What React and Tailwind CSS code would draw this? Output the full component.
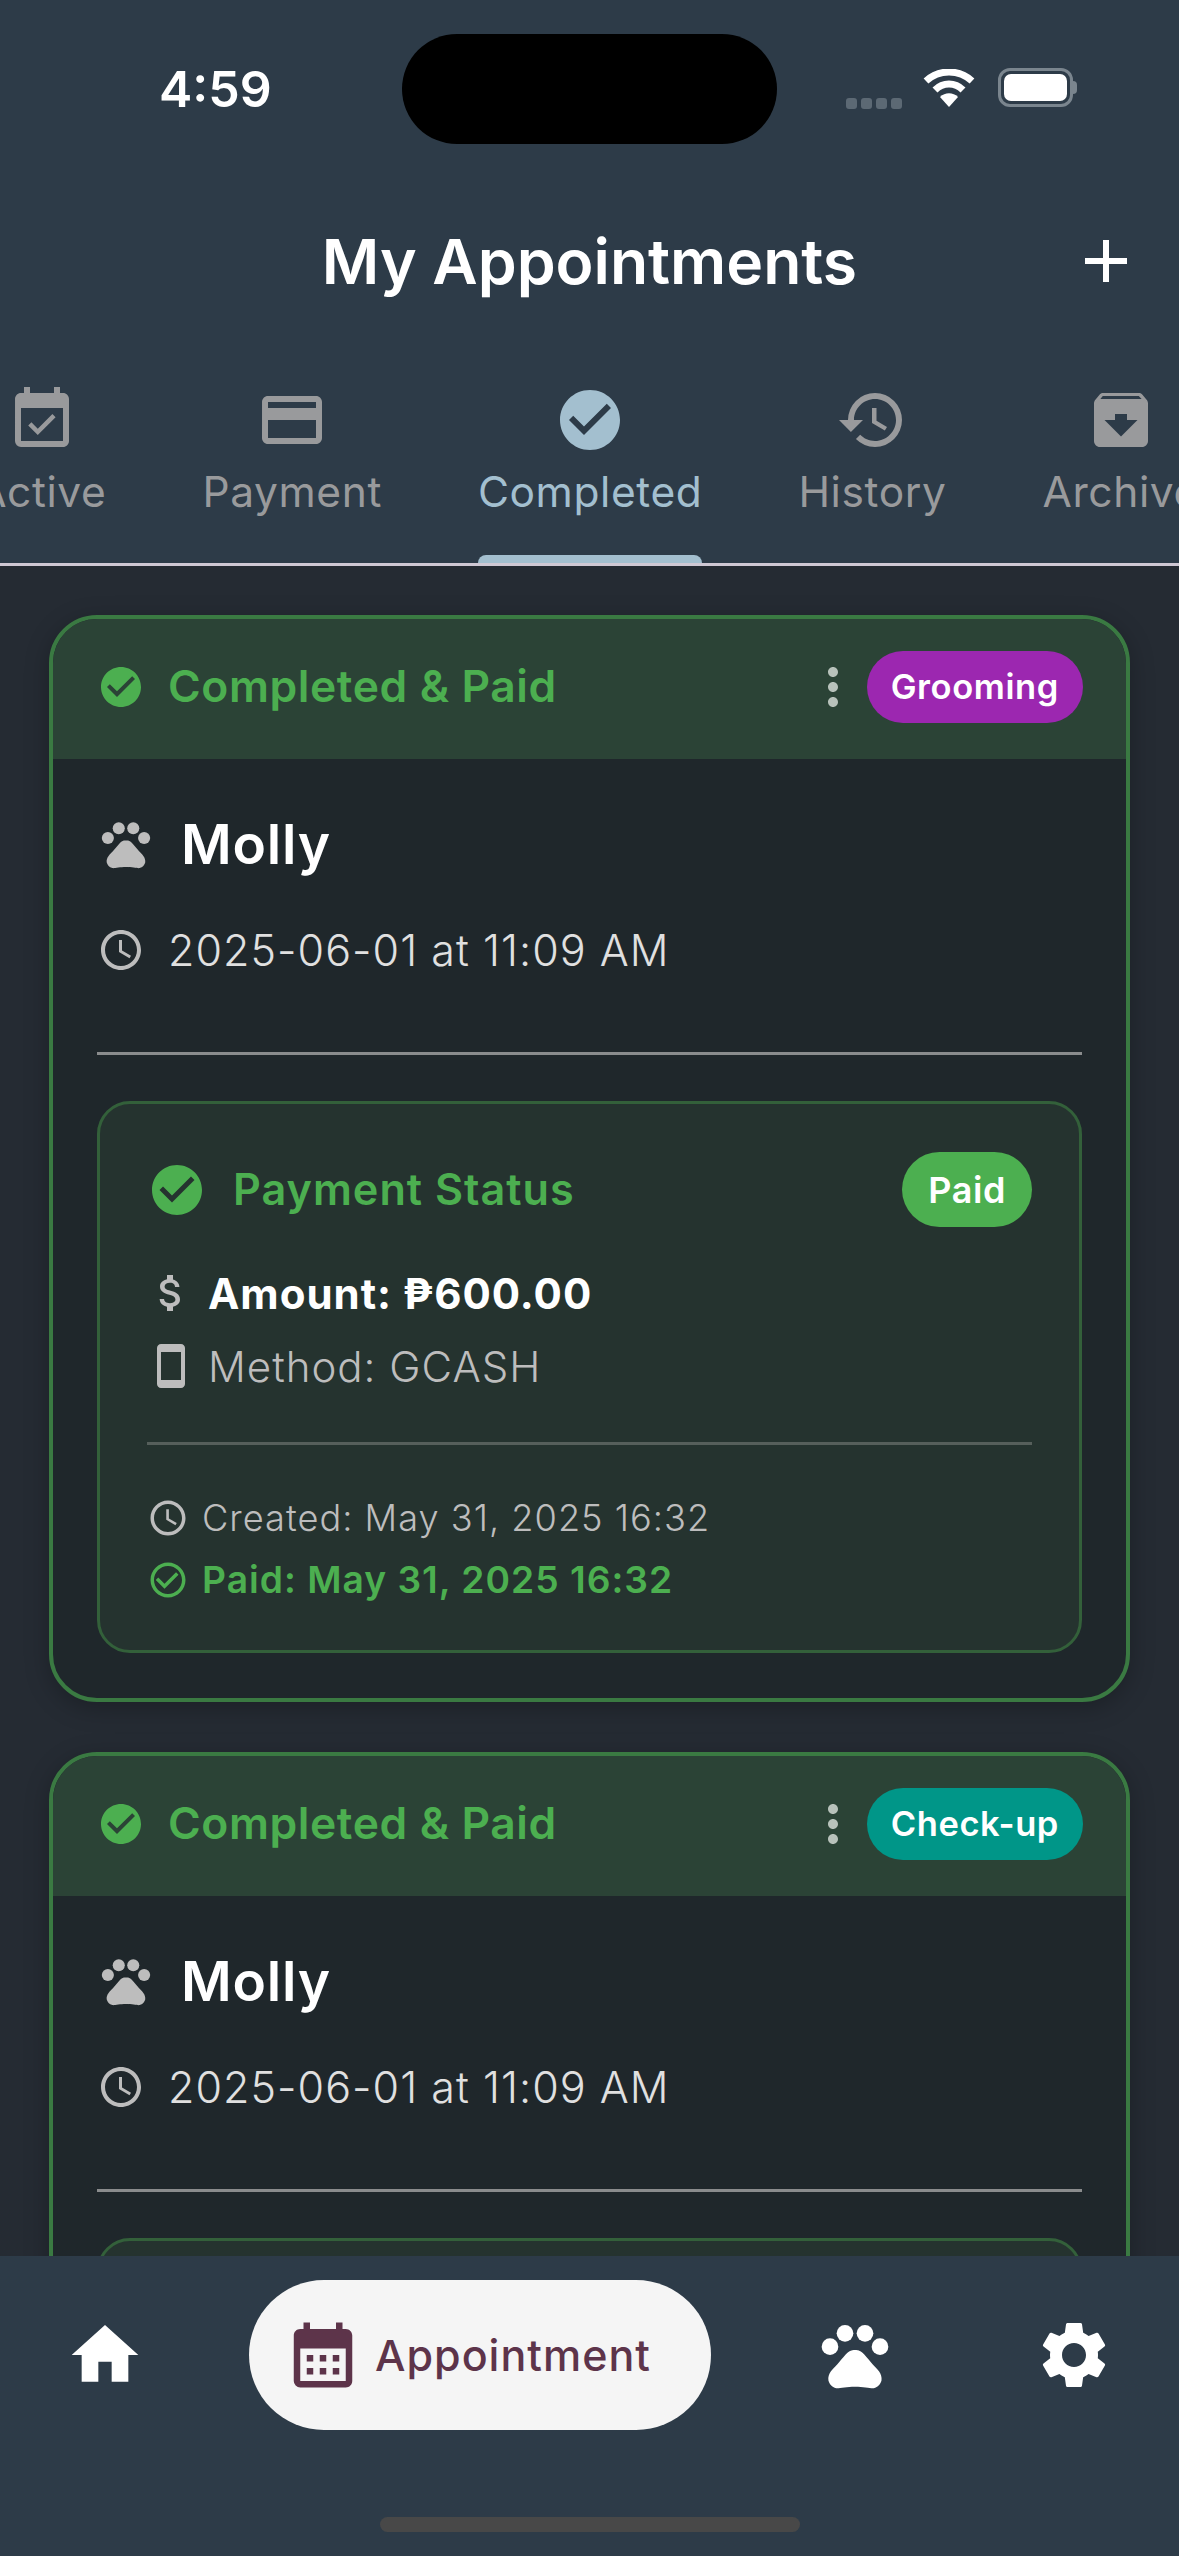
import {
  MdEventAvailable, MdCreditCard, MdCheckCircle, MdHistory, MdArchive, MdAdd, MdPets,
  MdAccessTime, MdAttachMoney, MdSmartphone, MdCheckCircleOutline, MdHome, MdCalendarMonth, MdSettings, MdMoreVert,
} from "react-icons/md";

const tabs = [
  { label: "Active", Icon: MdEventAvailable },
  { label: "Payment", Icon: MdCreditCard },
  { label: "Completed", Icon: MdCheckCircle, active: true },
  { label: "History", Icon: MdHistory },
  { label: "Archive", Icon: MdArchive },
];

function StatusBar() {
  return (
    <div className="h-[178px] shrink-0 flex items-start pt-[34px] pl-[159px] text-white">
      <span className="w-[243px] h-[110px] flex items-center text-[50px] font-semibold">4:59</span>
      <div className="w-[375px] h-[110px] rounded-full bg-black" />
      <div className="h-[110px] flex items-center ml-[69px]">
        <div className="flex gap-[4px] mt-[28px]">
          <span className="w-[11px] h-[11px] rounded-[3px] bg-[#5c6974]" />
          <span className="w-[11px] h-[11px] rounded-[3px] bg-[#5c6974]" />
          <span className="w-[11px] h-[11px] rounded-[3px] bg-[#5c6974]" />
          <span className="w-[11px] h-[11px] rounded-[3px] bg-[#5c6974]" />
        </div>
        <svg className="ml-[21px] w-[52px] h-[38px] -mt-[3px]" viewBox="0 0 52 38" fill="none">
          <path d="M3 12 C16 0 36 0 49 12" stroke="white" strokeWidth="7" />
          <path d="M12 21 C20 13 32 13 40 21" stroke="white" strokeWidth="7" />
          <path d="M26 38 L17 28 C22 23 30 23 35 28 Z" fill="white" />
        </svg>
        <div className="ml-[23px] -mt-[3px] flex items-center">
          <div className="w-[75px] h-[39px] rounded-[12px] border-[3px] border-[#7a858e] p-[3px]">
            <div className="w-full h-full rounded-[7px] bg-white" />
          </div>
          <span className="w-[4px] h-[13px] rounded-r-full bg-[#7a858e]" />
        </div>
      </div>
    </div>
  );
}

function Tabs() {
  return (
    <div className="shrink-0 border-b-[3px] border-[#cfc8d4] flex justify-center overflow-hidden h-[208px] pr-[3px]">
      {tabs.map(({ label, Icon, active }) => (
        <div key={label} className={`shrink-0 flex flex-col items-center mx-[48px] relative ${active ? "text-[#a3bfcf]" : "text-[#999a9c]"}`}>
          <Icon className="w-[72px] h-[72px] mt-[26px]" />
          <span className="text-[42.5px] leading-[48px] tracking-[0.6px] mt-[12px]">{label}</span>
          {active && <span className="absolute left-0 right-0 bottom-0 h-[8px] rounded-t-[8px] bg-[#a3bfcf]" />}
        </div>
      ))}
    </div>
  );
}

function AppointmentCard({ service, tone }) {
  return (
    <div className="shrink-0 rounded-[48px] border-[4px] border-[#3a7a42] bg-[#1f272b] overflow-hidden shadow-[0_6px_24px_rgba(0,0,0,0.25)]">
      <div className="h-[140px] bg-[#2b4336] flex items-center pb-[5px] pl-[44px] pr-[43px] text-[#4caf50]">
        <MdCheckCircle className="w-[48px] h-[48px]" />
        <span className="ml-[23px] text-[44.4px] font-semibold tracking-[0.6px]">Completed &amp; Paid</span>
        <MdMoreVert className="ml-auto w-[60px] h-[60px] text-[#b8c2bb]" />
        <span className={`ml-[4px] h-[72px] px-[24px] rounded-full flex items-center text-white text-[34.5px] font-semibold tracking-[0.6px] ${tone}`}>{service}</span>
      </div>
      <div className="px-[44px] pb-[45px]">
        <div className="flex items-center h-[72px] mt-[49px]">
          <MdPets className="w-[58px] h-[58px] text-[#bdbdbd]" />
          <span className="ml-[26px] text-[55px] font-semibold text-white tracking-[0.8px]">Molly</span>
        </div>
        <div className="flex items-center h-[60px] mt-[40px] pb-[0px]">
          <MdAccessTime className="w-[48px] h-[48px] text-[#bdbdbd]" />
          <span className="ml-[23px] text-[43px] font-light text-[#e0e0e0] tracking-[1.05px]">2025-06-01 at 11:09 AM</span>
        </div>
        <div className="h-[3px] bg-[#8a8c8d] mt-[72px]" />
        <div className="mt-[46px] rounded-[33px] border-[3px] border-[#33603a] bg-[#25332f] pl-[47px] pr-[47px] pt-[48px] pb-[50px]">
          <div className="flex items-center h-[75px]">
            <MdCheckCircle className="w-[60px] h-[60px] text-[#4caf50]" />
            <span className="ml-[26px] text-[43.2px] font-semibold text-[#4caf50] tracking-[1px]">Payment Status</span>
            <span className="ml-auto h-[75px] px-[26px] rounded-full bg-[#4caf50] flex items-center text-white text-[36px] font-semibold tracking-[0.6px]">Paid</span>
          </div>
          <div className="flex items-center h-[60px] mt-[36px]">
            <MdAttachMoney className="w-[48px] h-[48px] text-[#bdbdbd]" />
            <span className="ml-[13px] text-[42px] font-bold text-white tracking-[1px]">Amount: ₱600.00</span>
          </div>
          <div className="flex items-center h-[60px] mt-[13px]">
            <MdSmartphone className="w-[48px] h-[48px] text-[#bdbdbd]" />
            <span className="ml-[13px] text-[42px] font-light text-[#bdbdbd] tracking-[1px]">Method: GCASH</span>
          </div>
          <div className="h-[3px] bg-[#565f5b] mt-[46px]" />
          <div className="flex items-center h-[40px] mt-[53px]">
            <MdAccessTime className="w-[42px] h-[42px] text-[#bdbdbd]" />
            <span className="ml-[13px] text-[36.2px] font-light text-[#bdbdbd] tracking-[1px]">Created: May 31, 2025 16:32</span>
          </div>
          <div className="flex items-center h-[40px] mt-[22px]">
            <MdCheckCircleOutline className="w-[42px] h-[42px] text-[#4caf50]" />
            <span className="ml-[13px] text-[37.2px] font-semibold text-[#4caf50] tracking-[1px]">Paid: May 31, 2025 16:32</span>
          </div>
        </div>
      </div>
    </div>
  );
}

function BottomNav() {
  return (
    <div className="h-[300px] shrink-0 bg-[#2d3b48] flex flex-col">
      <div className="flex items-center h-[150px] mt-[24px] pl-[65px]">
        <MdHome className="w-[80px] h-[80px] text-white" />
        <div className="ml-[104px] w-[462px] h-[150px] rounded-full bg-[#f5f5f5] flex items-center pl-[35px] text-[#5d344a]">
          <MdCalendarMonth className="w-[78px] h-[78px]" />
          <span className="ml-[13px] text-[43px] font-medium tracking-[1px]">Appointment</span>
        </div>
        <MdPets className="ml-[104px] w-[80px] h-[80px] text-white" />
        <MdSettings className="ml-[139px] w-[80px] h-[80px] text-white" />
      </div>
      <div className="mt-[87px] mx-auto w-[420px] h-[15px] rounded-full bg-[#484848]" />
    </div>
  );
}

export default function App() {
  return (
    <div className="w-[1179px] h-[2556px] flex flex-col overflow-hidden bg-[#2d3b48] font-['Inter',sans-serif]">
      <StatusBar />
      <div className="h-[180px] shrink-0 flex items-center justify-center relative">
        <h1 className="text-[62.4px] font-semibold text-white -mt-[12px]">My Appointments</h1>
        <MdAdd className="absolute right-[37px] top-[47px] w-[72px] h-[72px] text-white" />
      </div>
      <Tabs />
      <div className="flex-1 min-h-0 overflow-hidden bg-[#252b33] flex flex-col gap-[50px] px-[49px] pt-[49px]">
        <AppointmentCard service="Grooming" tone="bg-[#9c27b0]" />
        <AppointmentCard service="Check-up" tone="bg-[#009688]" />
      </div>
      <BottomNav />
    </div>
  );
}
